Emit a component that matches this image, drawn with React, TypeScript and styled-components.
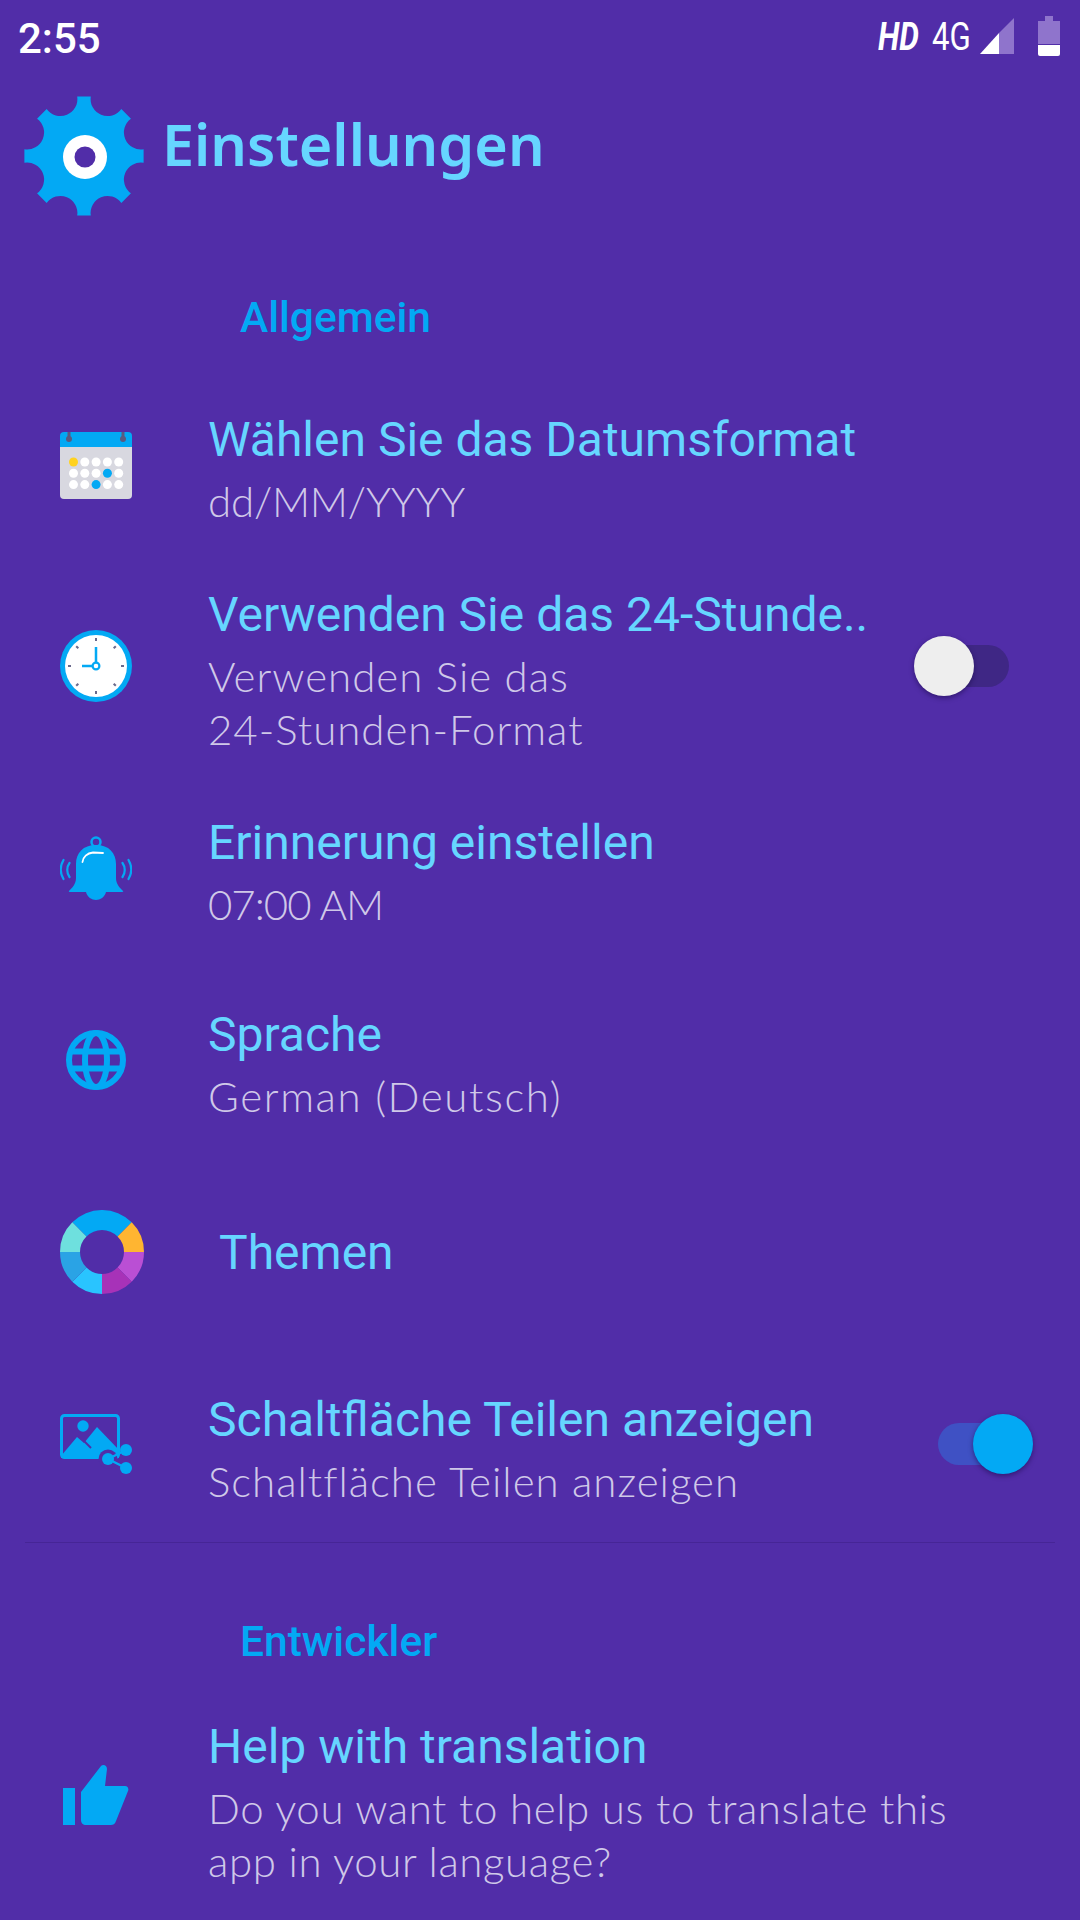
import React from 'react';
import styled, { createGlobalStyle } from 'styled-components';

const GlobalStyle = createGlobalStyle`
  html, body { margin: 0; padding: 0; background: #512da8; }
`;

const Screen = styled.div`
  width: 1080px;
  height: 1920px;
  overflow: hidden;
  background: #512da8;
  font-family: Roboto, sans-serif;
`;

const StatusBar = styled.div`
  height: 72px;
  display: flex;
  align-items: center;
  justify-content: space-between;
  padding: 0 20px 0 18px;
  box-sizing: border-box;
  color: #fff;
`;

const Clock = styled.span`
  font-size: 42px;
  font-weight: 500;
  margin-top: 5px;
`;

const StatusIcons = styled.div`
  display: flex;
  align-items: center;
`;

const NetLabel = styled.span<{ $italic?: boolean }>`
  font-size: 38px;
  font-weight: ${(p) => (p.$italic ? 700 : 400)};
  font-style: ${(p) => (p.$italic ? 'italic' : 'normal')};
  display: inline-block;
  width: ${(p) => (p.$italic ? 54 : 47)}px;
  margin-top: 2px;
  white-space: nowrap;
  transform: scaleX(0.82);
  transform-origin: left center;
`;

const Header = styled.div`
  height: 168px;
  display: flex;
  align-items: center;
  padding-left: 24px;
  box-sizing: border-box;
`;

const PageTitle = styled.h1`
  margin: 0 0 25px 18px;
  font-family: 'Noto Sans', sans-serif;
  font-size: 57.5px;
  font-weight: 600;
  color: #66d6ff;
`;

const SectionTitle = styled.div<{ $top: number; $bottom: number }>`
  padding: ${(p) => p.$top}px 0 ${(p) => p.$bottom}px 240px;
  font-size: 42.5px;
  line-height: 48px;
  font-weight: 500;
  color: #03a9f4;
`;

const Row = styled.div<{ $height: number }>`
  height: ${(p) => p.$height}px;
  display: flex;
  align-items: center;
`;

const IconSlot = styled.div<{ $lift: number; $nudge?: number }>`
  width: 192px;
  flex: none;
  display: flex;
  justify-content: center;
  box-sizing: border-box;
  margin-right: 16px;
  padding-bottom: ${(p) => p.$lift * 2}px;
  padding-left: ${(p) => p.$nudge ?? 0}px;
`;

const TextBlock = styled.div<{ $indent?: number; $flat?: boolean }>`
  flex: 1;
  margin-left: ${(p) => p.$indent ?? 0}px;
  padding-bottom: ${(p) => (p.$flat ? 0 : 8)}px;
`;

const RowTitle = styled.div`
  font-size: 48px;
  line-height: 70px;
  color: #66d6ff;
  white-space: nowrap;
`;

const RowSub = styled.div<{ $track?: number }>`
  font-family: Lato, sans-serif;
  font-weight: 300;
  font-size: 42px;
  line-height: 53px;
  letter-spacing: ${(p) => p.$track ?? 1}px;
  color: #cfc8e8;
  white-space: nowrap;
`;

const Divider = styled.div`
  height: 1px;
  margin: 0 25px;
  background: #462596;
`;

const SwitchTrack = styled.div<{ $on?: boolean }>`
  position: relative;
  flex: none;
  width: 94px;
  height: 42px;
  border-radius: 21px;
  margin-right: ${(p) => (p.$on ? 48 : 71)}px;
  margin-bottom: 12px;
  background: ${(p) => (p.$on ? '#3f51c4' : '#3f2785')};
`;

const SwitchKnob = styled.div<{ $on?: boolean }>`
  position: absolute;
  top: -9px;
  left: ${(p) => (p.$on ? 35 : -1)}px;
  width: 60px;
  height: 60px;
  border-radius: 50%;
  background: ${(p) => (p.$on ? '#03a9f4' : '#eeeeee')};
  box-shadow: 0 2px 5px rgba(20, 5, 60, 0.5);
`;

const BLUE = '#03a9f4';

const polar = (r: number, deg: number, c = 60) => {
  const a = ((deg - 90) * Math.PI) / 180;
  return `${(c + r * Math.cos(a)).toFixed(2)} ${(c + r * Math.sin(a)).toFixed(2)}`;
};

const gearPath = () => {
  let d = '';
  for (let i = 0; i < 8; i++) {
    const a = i * 45;
    d += `${i === 0 ? 'M' : 'L'}${polar(60, a - 6.5)} L${polar(60, a + 6.5)} A17 17 0 0 0 ${polar(60, a + 38.5)} `;
  }
  return d + 'Z';
};

const GearIcon = () => (
  <svg width={120} height={120} viewBox="0 0 120 120">
    <path d={gearPath()} fill={BLUE} />
    <circle cx="61" cy="61" r="22" fill="#fff" />
    <circle cx="61" cy="61" r="10.5" fill="#512da8" />
  </svg>
);

const SignalIcon = () => (
  <svg width={34} height={36} viewBox="0 0 34 36" style={{ marginLeft: 1 }}>
    <path d="M34 0V36H19V15Z" fill="#8f74cc" />
    <path d="M19 15V36H0Z" fill="#fff" />
  </svg>
);

const BatteryIcon = () => (
  <svg width={22} height={40} viewBox="0 0 22 40" style={{ marginLeft: 24 }}>
    <path d="M7 0H15V5H22V28H0V5H7Z" fill="#8f74cc" />
    <path d="M0 29H22V38a2 2 0 0 1-2 2H2a2 2 0 0 1-2-2Z" fill="#fff" />
  </svg>
);

const CalendarIcon = () => {
  const dots = [0, 1, 2].flatMap((r) => [0, 1, 2, 3, 4].map((c) => ({ r, c })));
  const dotFill = (r: number, c: number) => {
    if (r === 0 && c === 0) return '#ffd21f';
    if ((r === 1 && c === 3) || (r === 2 && c === 2)) return BLUE;
    return '#fff';
  };
  return (
    <svg width={72} height={67} viewBox="0 0 72 67">
      <path d="M0 15H72V63a4 4 0 0 1-4 4H4a4 4 0 0 1-4-4Z" fill="#d8d8e0" />
      <path d="M4 0H68a4 4 0 0 1 4 4V15H0V4a4 4 0 0 1 4-4Z" fill={BLUE} />
      <path d="M9 0V6M63 0V6" stroke="#5b5a80" strokeWidth="3" />
      <circle cx="9" cy="7" r="3" fill="#5b5a80" />
      <circle cx="63" cy="7" r="3" fill="#5b5a80" />
      {dots.map(({ r, c }) => (
        <circle key={`${r}-${c}`} cx={13.5 + c * 11.3} cy={30 + r * 11.3} r="4.5" fill={dotFill(r, c)} />
      ))}
    </svg>
  );
};

const ClockIcon = () => (
  <svg width={72} height={72} viewBox="0 0 72 72">
    <circle cx="36" cy="36" r="36" fill={BLUE} />
    <circle cx="36" cy="36" r="31" fill="#fff" />
    {[0, 45, 90, 135, 180, 225, 270, 315].map((a) => (
      <rect key={a} x="35" y="8" width="2" height="3" fill="#6a6a8c" transform={`rotate(${a} 36 36)`} />
    ))}
    <path d="M36 17V32M22 36H32" stroke={BLUE} strokeWidth="2.5" fill="none" />
    <circle cx="36" cy="36" r="3.4" fill="#fff" stroke={BLUE} strokeWidth="2.2" />
  </svg>
);

const BellIcon = () => (
  <svg width={72} height={64} viewBox="0 0 72 64">
    <circle cx="36" cy="6" r="4.5" fill="none" stroke={BLUE} strokeWidth="2.5" />
    <path
      d="M36 9C49 9 56 17 56 28V42C56 48 60 52 63 55Q64 56 62 56H46C45 61 40 64 36 64C32 64 27 61 26 56H10Q8 56 9 55C12 52 16 48 16 42V28C16 17 23 9 36 9Z"
      fill={BLUE}
    />
    <path d="M22.5 26C23 21 27 17 33 16.5L43 17" stroke="#fff" strokeWidth="1.8" fill="none" strokeLinecap="round" />
    <path d="M9.5 27C6.5 31 6.5 37 9.5 41M3.5 24C0 30 0 37 3.5 43" stroke={BLUE} strokeWidth="2.2" fill="none" strokeLinecap="round" />
    <path d="M62.5 27C65.5 31 65.5 37 62.5 41M68.5 24C72 30 72 37 68.5 43" stroke={BLUE} strokeWidth="2.2" fill="none" strokeLinecap="round" />
  </svg>
);

const GlobeIcon = () => (
  <svg width={72} height={72} viewBox="0 0 72 72" fill="none" stroke={BLUE} strokeWidth="6">
    <circle cx="36" cy="36" r="27" />
    <ellipse cx="36" cy="36" rx="11" ry="27" />
    <path d="M10 27.5H62M10 44.5H62" />
  </svg>
);

const ringSlice = (from: number, to: number) =>
  `M${polar(42, from, 42)} A42 42 0 0 1 ${polar(42, to, 42)} L${polar(22, to, 42)} A22 22 0 0 0 ${polar(22, from, 42)} Z`;

const ringColors: [number, number, string][] = [
  [-45, 45, '#03a9f4'],
  [45, 90, '#ffb531'],
  [90, 135, '#ba4fd4'],
  [135, 180, '#a732b8'],
  [180, 225, '#29c4ff'],
  [225, 270, '#2aa3e5'],
  [270, 315, '#6ee0de'],
];

const ThemeRing = () => (
  <svg width={84} height={84} viewBox="0 0 84 84">
    {ringColors.map(([from, to, color]) => (
      <path key={from} d={ringSlice(from, to)} fill={color} />
    ))}
  </svg>
);

const ShareImageIcon = () => (
  <svg width={72} height={62} viewBox="0 0 72 62">
    <rect x="1.5" y="1.5" width="57" height="42" rx="3" fill="none" stroke={BLUE} strokeWidth="3" />
    <circle cx="23" cy="12" r="5.7" fill={BLUE} />
    <path d="M1 42L17 23L24 29L37 13L59 36V44H1Z" fill={BLUE} />
    <path d="M24 27L31 34" stroke="#512da8" strokeWidth="2" />
    <circle cx="48" cy="45" r="9.5" fill="#512da8" />
    <path d="M48 45L66 36M48 45L66 54" stroke={BLUE} strokeWidth="2.5" />
    <circle cx="48" cy="45" r="6" fill={BLUE} />
    <circle cx="66" cy="36" r="6" fill={BLUE} />
    <circle cx="66" cy="54" r="6" fill={BLUE} />
  </svg>
);

const ThumbIcon = () => (
  <svg width={72} height={62} viewBox="0 0 72 62">
    <rect x="3" y="24" width="12" height="37" fill={BLUE} />
    <path d="M21 28L41 2c2-2 6-1 6 3L45 22H65c3 0 4 3 3 5L56 57c-1 3-3 4-5 4H26c-3 0-5-2-5-5Z" fill={BLUE} />
  </svg>
);

export default function App() {
  return (
    <Screen>
      <GlobalStyle />
      <StatusBar>
        <Clock>2:55</Clock>
        <StatusIcons>
          <NetLabel $italic>HD</NetLabel>
          <NetLabel>4G</NetLabel>
          <SignalIcon />
          <BatteryIcon />
        </StatusIcons>
      </StatusBar>

      <Header>
        <GearIcon />
        <PageTitle>Einstellungen</PageTitle>
      </Header>

      <SectionTitle $top={54} $bottom={18}>Allgemein</SectionTitle>

      <Row $height={220}>
        <IconSlot $lift={5}><CalendarIcon /></IconSlot>
        <TextBlock>
          <RowTitle>Wählen Sie das Datumsformat</RowTitle>
          <RowSub $track={-0.2}>dd/MM/YYYY</RowSub>
        </TextBlock>
      </Row>

      <Row $height={184}>
        <IconSlot $lift={6}><ClockIcon /></IconSlot>
        <TextBlock>
          <RowTitle>Verwenden Sie das 24-Stunde..</RowTitle>
          <RowSub>Verwenden Sie das<br />24-Stunden-Format</RowSub>
        </TextBlock>
        <SwitchTrack><SwitchKnob /></SwitchTrack>
      </Row>

      <Row $height={218}>
        <IconSlot $lift={5}><BellIcon /></IconSlot>
        <TextBlock>
          <RowTitle>Erinnerung einstellen</RowTitle>
          <RowSub $track={-1}>07:00 AM</RowSub>
        </TextBlock>
      </Row>

      <Row $height={166}>
        <IconSlot $lift={5}><GlobeIcon /></IconSlot>
        <TextBlock>
          <RowTitle>Sprache</RowTitle>
          <RowSub $track={1.6}>German (Deutsch)</RowSub>
        </TextBlock>
      </Row>

      <Row $height={210}>
        <IconSlot $lift={1} $nudge={12}><ThemeRing /></IconSlot>
        <TextBlock $indent={11} $flat>
          <RowTitle>Themen</RowTitle>
        </TextBlock>
      </Row>

      <Row $height={184}>
        <IconSlot $lift={5}><ShareImageIcon /></IconSlot>
        <TextBlock>
          <RowTitle>Schaltfläche Teilen anzeigen</RowTitle>
          <RowSub>Schaltfläche Teilen anzeigen</RowSub>
        </TextBlock>
        <SwitchTrack $on><SwitchKnob $on /></SwitchTrack>
      </Row>

      <Divider />

      <SectionTitle $top={75} $bottom={46}>Entwickler</SectionTitle>

      <Row $height={184}>
        <IconSlot $lift={9}><ThumbIcon /></IconSlot>
        <TextBlock>
          <RowTitle>Help with translation</RowTitle>
          <RowSub $track={0.6}>Do you want to help us to translate this<br />app in your language?</RowSub>
        </TextBlock>
      </Row>
    </Screen>
  );
}
